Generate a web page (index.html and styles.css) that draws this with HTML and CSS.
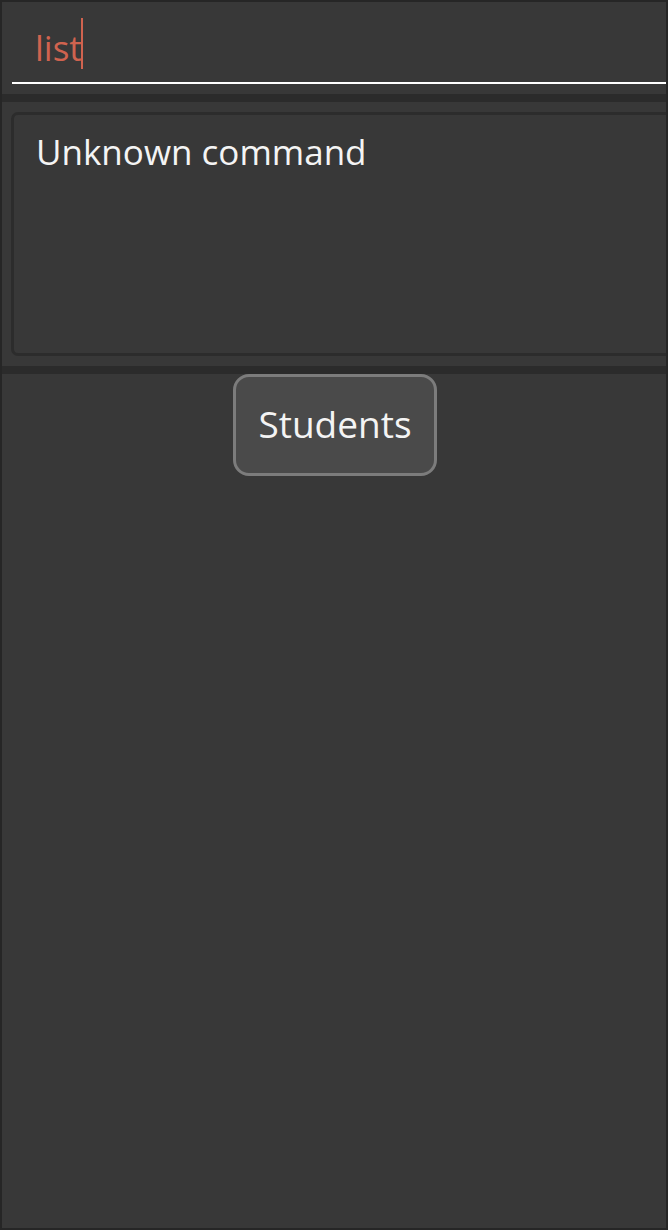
FILE: index.html
```html
<!DOCTYPE html>
<html>
<head>
<meta charset="utf-8">
<link rel="stylesheet" href="styles.css">
</head>
<body>
<div class="window">
  <div class="command-pane">
    <div class="command-field">
      <span class="command-text">list</span><span class="caret"></span>
    </div>
  </div>
  <div class="divider"></div>
  <div class="result-pane">
    <div class="result-box">Unknown command</div>
  </div>
  <div class="divider"></div>
  <div class="list-pane">
    <button class="tab-button">Students</button>
  </div>
</div>
</body>
</html>
```
FILE: styles.css
```css
html, body {
  margin: 0;
  padding: 0;
  background: #262626;
}
body {
  font-family: "Open Sans", "DejaVu Sans", sans-serif;
  width: 668px;
  height: 1230px;
  overflow: hidden;
}
.window {
  box-sizing: border-box;
  width: 668px;
  height: 1230px;
  border: 2px solid #262626;
  background: #383838;
  display: flex;
  flex-direction: column;
  overflow: hidden;
}
.command-pane {
  height: 92px;
  padding-left: 10px;
  box-sizing: border-box;
  display: flex;
  flex-direction: column;
}
.command-field {
  border-bottom: 2px solid #ffffff;
  padding-left: 23px;
  display: flex;
  align-items: flex-start;
  box-sizing: border-box;
  height: 82px;
}
.command-text {
  color: #d0634f;
  font-size: 35px;
  line-height: 1;
  margin-top: 28px;
}
.caret {
  display: inline-block;
  width: 2px;
  height: 51px;
  background: #d0634f;
  margin-left: -1px;
  margin-top: 16px;
}
.divider {
  height: 8px;
  background: #2b2b2b;
  flex: none;
}
.result-pane {
  height: 264px;
  box-sizing: border-box;
  padding: 10px 0 10px 9px;
  flex: none;
}
.result-box {
  box-sizing: border-box;
  height: 244px;
  width: 680px;
  border: 3px solid #2c2c2c;
  border-radius: 7px;
  padding: 13px 0 0 22px;
  color: #f4f4f4;
  font-size: 35px;
  line-height: 48px;
}
.list-pane {
  flex: 1;
  display: flex;
  justify-content: center;
  align-items: flex-start;
  padding-left: 2px;
}
.tab-button {
  font-family: inherit;
  width: 204px;
  height: 102px;
  box-sizing: border-box;
  background: #4a4a4a;
  border: 3px solid #7c7c7c;
  border-radius: 16px;
  color: #f4f4f4;
  font-size: 37px;
  padding: 0 0 4px 0;
  margin-top: 0;
}
```
